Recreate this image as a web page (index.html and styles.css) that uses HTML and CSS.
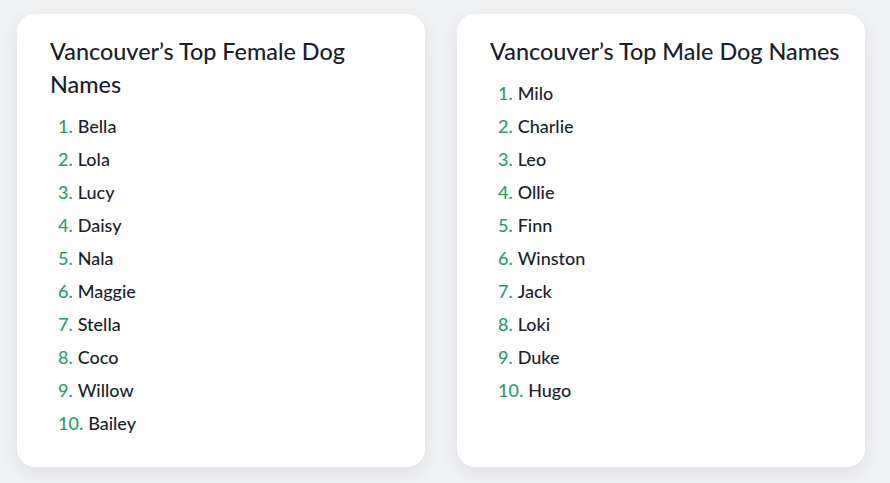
FILE: index.html
```html
<!DOCTYPE html>
<html lang="en">
<head>
<meta charset="utf-8">
<title>Vancouver's Top Dog Names</title>
<link rel="stylesheet" href="styles.css">
</head>
<body>
<main class="page">
  <section class="card">
    <h2 class="card-title">Vancouver’s Top Female Dog Names</h2>
    <ol class="names">
      <li>Bella</li>
      <li>Lola</li>
      <li>Lucy</li>
      <li>Daisy</li>
      <li>Nala</li>
      <li>Maggie</li>
      <li>Stella</li>
      <li>Coco</li>
      <li>Willow</li>
      <li>Bailey</li>
    </ol>
  </section>
  <section class="card">
    <h2 class="card-title">Vancouver’s Top Male Dog Names</h2>
    <ol class="names">
      <li>Milo</li>
      <li>Charlie</li>
      <li>Leo</li>
      <li>Ollie</li>
      <li>Finn</li>
      <li>Winston</li>
      <li>Jack</li>
      <li>Loki</li>
      <li>Duke</li>
      <li>Hugo</li>
    </ol>
  </section>
</main>
</body>
</html>
```

FILE: styles.css
```css
* { box-sizing: border-box; }

html, body {
  margin: 0;
  background: #f1f2f4;
}

body {
  font-family: Lato, "Open Sans", "Liberation Sans", sans-serif;
  color: #1b1f2a;
}

.page {
  display: grid;
  grid-template-columns: 408px 408px;
  column-gap: 32px;
  padding: 14px 25px 17px 17px;
}

.card {
  background: #ffffff;
  border-radius: 18px;
  box-shadow: 0 6px 18px rgba(20, 30, 50, 0.09);
  padding: 21px 18px 27px 33px;
}

.card-title {
  margin: 0;
  font-size: 23.4px;
  line-height: 33px;
  font-weight: 500;
  color: #1b1f2a;
}

.names {
  list-style: none;
  margin: 9px 0 0;
  padding: 0 0 0 8px;
  counter-reset: rank;
}

.names li {
  counter-increment: rank;
  font-size: 18px;
  line-height: 33px;
  font-weight: 500;
}

.names li::before {
  content: counter(rank) ".";
  color: #2a9d6a;
  margin-right: 5px;
}
```
